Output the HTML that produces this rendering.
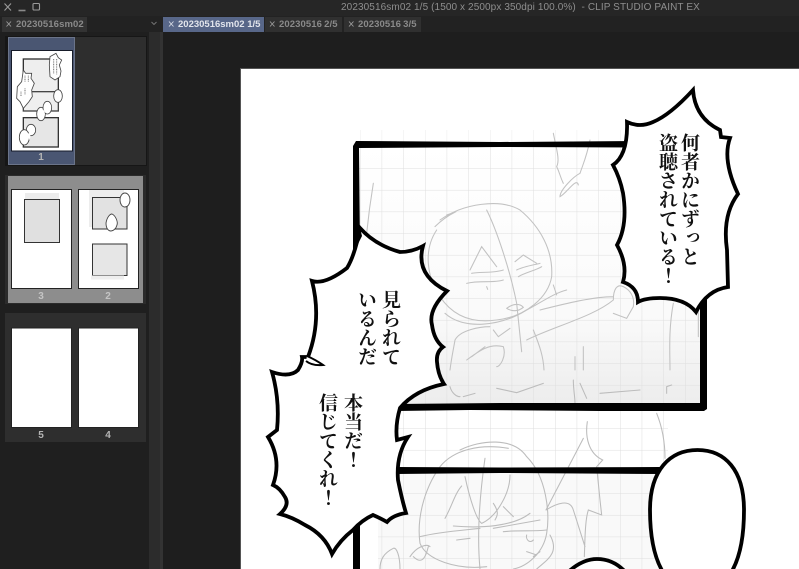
<!DOCTYPE html>
<html lang="ja"><head><meta charset="utf-8"><style>
html,body{margin:0;padding:0;width:799px;height:569px;overflow:hidden;background:#1e1e1e}
#a{position:relative;width:799px;height:569px;overflow:hidden;font-family:"Liberation Sans","Noto Sans CJK JP",sans-serif}
.b{position:absolute}
.t{position:absolute;white-space:nowrap;font-size:10px;line-height:16px;height:16px;filter:blur(.25px)}
.v{position:absolute;writing-mode:vertical-rl;white-space:nowrap;font-family:"Liberation Serif","Noto Serif CJK JP","Noto Serif CJK SC",serif;font-size:19px;line-height:19px;font-weight:700;color:#111}
.n{position:absolute;font-size:10px;font-weight:bold;color:#b5b5b5;width:20px;text-align:center;line-height:10px}
svg{position:absolute;left:0;top:0}
</style></head><body><div id="a">
<div class="b" style="left:0;top:0;width:799px;height:16px;background:#262626"></div>
<div class="b" style="left:0;top:16px;width:799px;height:16px;background:#222"></div>
<div class="b" style="left:149px;top:32px;width:14px;height:537px;background:#2c2c2c"></div>
<div class="b" style="left:160px;top:32px;width:3px;height:537px;background:#333"></div>
<div class="b" style="left:0;top:32px;width:149px;height:537px;background:#1f1f1f"></div>
<div class="b" style="left:2px;top:17px;width:85px;height:15px;background:#333"></div>
<div class="b" style="left:163px;top:17px;width:101px;height:15px;background:#586789"></div>
<div class="b" style="left:265px;top:17px;width:77px;height:15px;background:#303030"></div>
<div class="b" style="left:344px;top:17px;width:77px;height:15px;background:#303030"></div>
<div class="b" style="left:5px;top:36px;width:142px;height:130px;background:#161616"></div>
<div class="b" style="left:8px;top:37px;width:138px;height:128px;background:#2e2e2e"></div>
<div class="b" style="left:8px;top:37px;width:67px;height:128px;background:#4a5672;box-shadow:inset 0 0 0 1px #6b7489"></div>
<div class="b" style="left:5px;top:175px;width:141px;height:129px;background:#2b2b2b"></div>
<div class="b" style="left:8px;top:176px;width:135px;height:127px;background:#8d8d8d"></div>
<div class="b" style="left:5px;top:313px;width:141px;height:129px;background:#2e2e2e"></div>

<svg width="799" height="569" viewBox="0 0 799 569">
<defs>
<pattern id="g" x="425" y="428.3" width="21.67" height="21.67" patternUnits="userSpaceOnUse">
<path d="M0,0V21.67M0,0H21.67" stroke="#dedede" stroke-width="1" fill="none"/>
</pattern>
<linearGradient id="sh" x1="0" y1="0" x2="0" y2="1"><stop offset="0" stop-color="#fff"/><stop offset=".65" stop-color="#fafafa"/><stop offset="1" stop-color="#ececec"/></linearGradient>
<filter id="bl"><feGaussianBlur stdDeviation=".6"/></filter>
<filter id="bs"><feGaussianBlur stdDeviation=".3"/></filter>
</defs>
<!-- window icons -->
<g stroke="#9a9a9a" stroke-width="1.1" fill="none">
<path d="M4.5,3.5L11,10.5M11,3.5L4.5,10.5"/>
<path d="M18.5,10.5H25.5" stroke-width="1.6" stroke="#8a8a8a"/>
<rect x="33" y="3.5" width="6.5" height="6.5" rx="1"/>
</g>
<g stroke="#9c9c9c" stroke-width=".9" fill="none">
<path d="M6.5,21.5L11,26.5M11,21.5L6.5,26.5"/>
<path d="M151.5,22L154,24.5L156.5,22" stroke="#777"/>
<path d="M169,21.5L173.5,26.5M173.5,21.5L169,26.5" stroke="#d6dae4"/>
<path d="M270,21.5L274.500,26.500M274.500,21.500L270,26.500"/>
<path d="M349,21.5L353.500,26.500M353.500,21.500L349,26.500"/>
</g>

<!-- page -->
<rect x="240" y="68" width="559" height="501" fill="#555"/>
<rect x="241" y="69" width="558" height="500" fill="#fff"/>
<rect x="356" y="144" width="347" height="263" fill="url(#sh)"/>
<rect x="356" y="130" width="320" height="14" fill="url(#g)" opacity=".6"/>
<rect x="356" y="144" width="347" height="263" fill="url(#g)"/>
<rect x="396" y="407" width="272" height="63" fill="url(#g)"/>
<rect x="378" y="470" width="320" height="99" fill="#f9f9f9"/>
<rect x="378" y="470" width="320" height="99" fill="url(#g)"/>

<!-- pencil sketch top panel (coords of 3x crop) -->
<g transform="translate(340,70) scale(.33333)" fill="none" stroke="#c2c2c2" stroke-width="3.2" stroke-linecap="round" filter="url(#bl)">
<path d="M285,470C330,425 380,415 320,435M300,450C370,400 480,385 540,420C600,470 640,540 635,620C625,680 560,740 470,750C400,760 340,740 300,680C260,620 250,540 290,480"/>
<path d="M440,420C470,480 510,600 530,700L545,845"/>
<path d="M390,600L425,530L470,590M395,610C420,605 460,610 490,600M380,640C420,630 460,640 490,630"/>
<path d="M525,575L550,555L590,580M530,600C550,590 580,585 600,580M535,620C550,610 590,600 605,590"/>
<path d="M440,650l3,8M500,715C520,700 540,700 550,712C535,725 515,725 500,715"/>
<path d="M315,730C370,780 480,770 560,720C600,700 640,670 680,660M640,645L650,675"/>
<path d="M560,810C640,770 760,740 820,690M600,720C680,700 760,680 820,680M820,690C820,660 830,640 850,650C870,660 885,680 880,710L860,745L820,730"/>
<path d="M345,810C360,780 420,770 450,770M345,810C340,840 335,860 330,900M460,780L475,800L510,775M580,780C600,830 610,860 612,900"/>
<path d="M380,870C420,840 450,820 490,830C500,860 480,890 470,890M395,860L435,830M705,860V900M730,830V900"/>
<path d="M640,190C650,240 660,270 650,290C660,310 660,320 670,340M720,310C700,320 660,360 660,380C680,370 710,320 715,345M750,210C740,260 730,280 720,310"/>
<path d="M1000,700C985,780 990,850 990,900M100,340C90,400 85,440 80,490M1075,720V800"/>
</g>
<!-- pencil sketch lower (coords of 3x crop) -->
<g transform="translate(380,380) scale(.33333)" fill="none" stroke="#bcbcbc" stroke-width="3.2" stroke-linecap="round" filter="url(#bl)">
<path d="M385,205C300,190 220,210 180,260C130,330 110,420 120,490C140,540 230,570 320,560"/>
<path d="M240,210C300,180 400,170 440,230C500,290 510,400 500,460C490,520 440,560 400,567"/>
<path d="M255,290C270,360 290,420 305,430C350,410 390,340 390,285M315,235C300,340 290,460 300,567M195,415C215,380 225,340 245,318"/>
<path d="M340,370C360,400 350,410 345,420M370,380L400,410M220,438C300,445 400,440 450,400M340,445L480,420M120,470C180,455 260,450 300,445M370,455C420,450 460,455 500,450"/>
<path d="M230,480l40,-5M440,465a12,15 0 0 0 20,15M440,515l30,10M460,530l20,-15"/>
<path d="M622,125C615,170 625,220 668,240L650,260L660,360L665,405L625,390C615,420 615,480 613,530M498,390L610,175M498,390C530,370 570,355 580,390L615,500M830,100C850,150 855,200 855,235"/>
<path d="M40,505C10,520 0,540 0,567M60,567C60,530 50,500 40,505M90,530C110,500 140,490 150,500M100,530C130,560 140,520 145,500"/>
<path d="M580,0C580,30 585,50 585,70M600,10L620,55M350,25L410,38L490,10M210,20C215,40 230,50 240,50M250,50L285,40M860,20l15,-5M860,40L860,20M660,40L780,30"/>
<path d="M510,465C540,520 500,540 470,567"/>
</g>

<!-- frames -->
<g fill="#000">
<path d="M353,146L356,141L500,142L640,141V147.500L500,147L359,148L360,250H353Z"/>
<path d="M700,290H707L707,409L704,411L600,411L470,410L396,411V404L500,403L700,403Z"/>
<path d="M396,467L500,467.500L660,467V474L500,473L396,474Z"/>
<path d="M353,525H360V569H353Z"/>
</g>

<!-- balloons -->
<g fill="#fff" stroke="#000" stroke-width="3.8" stroke-linejoin="miter" stroke-miterlimit="8">
<path d="M693,90Q695,118 720,130L721,137L730,138Q722,160 738,194Q722,215 727,250L728,287Q707,290 696,312Q685,298 660,298Q645,298 638,302Q638,287 623,282Q628,265 617,245Q628,225 623,193Q620,178 613,165Q628,155 627,122Q640,128 653,122Q670,115 693,90Z"/>
<path d="M360,228Q375,245 400,252Q412,252 423,246Q415,275 447,291Q428,310 432,325Q434,340 443,347Q436,352 437,362Q438,375 444,384Q415,390 400,408Q395,425 397,440L408,437Q396,455 398,480Q402,500 406,513Q393,515 387,522Q380,518 373,515Q362,520 353,530Q340,540 332,554Q325,535 305,525Q292,517 280,514Q290,505 285,497Q280,488 273,485Q282,460 268,437L277,430Q280,400 272,372Q290,378 298,370Q303,362 302,357L308,357Q322,320 312,281Q325,285 347,268Q355,255 360,228Z"/>
<path d="M650,510C650,470 670,450 697.500,450C725,450 744,470 744,510C744,560 730,590 697,595C665,590 650,560 650,510Z"/>
<path d="M565,575C575,565 585,559 597,559C610,559 620,565 628,575V590H565Z"/>
</g>
<path d="M307,356Q316,360 323,365Q312,366 306,361" fill="#fff" stroke="#000" stroke-width="2"/>
<path d="M355,243L360,228L362,236L356,248Z" fill="#000"/>

<!-- thumb page 1 -->
<rect x="11.500" y="50.500" width="61" height="100.500" fill="#fff" stroke="#161b28" stroke-width="1"/>
<g transform="translate(5,45) scale(.33333)" filter="url(#bs)">
<rect x="55" y="42" width="105" height="98" fill="#eeeeee" stroke="#333" stroke-width="4"/>
<rect x="55" y="140" width="105" height="58" fill="#efefef" stroke="#444" stroke-width="4"/>
<rect x="55" y="218" width="105" height="88" fill="#e6e6e6" stroke="#333" stroke-width="4"/>
<path d="M153,25L160,38L170,45L163,60L168,78L165,95L150,105L135,95L133,60L135,35Z" fill="#fff" stroke="#444" stroke-width="2.500"/>
<path d="M55,75L62,85L80,85L78,100L88,115L80,135L82,155L72,170L55,190L45,170L35,160L37,125L50,110Z" fill="#fff" stroke="#444" stroke-width="2.500"/>
<ellipse cx="159" cy="153" rx="13" ry="19" fill="#fff" stroke="#444" stroke-width="2.500"/>
<ellipse cx="108" cy="207" rx="13" ry="20" fill="#fff" stroke="#444" stroke-width="2.500"/>
<ellipse cx="127" cy="188" rx="13" ry="19" fill="#fff" stroke="#444" stroke-width="2.500"/>
<ellipse cx="78" cy="255" rx="14" ry="17" fill="#fff" stroke="#444" stroke-width="2.500"/>
<ellipse cx="58" cy="277" rx="15" ry="23" fill="#fff" stroke="#444" stroke-width="2.500"/>
<path d="M108,195C118,190 122,205 118,215" fill="#fff"/>
<path d="M68,265C78,262 78,278 72,285" fill="#fff"/>
<path d="M146,42V85M155,42V88M60,92V110M70,92V112M60,130V150M48,140V155" stroke="#777" stroke-width="3" stroke-dasharray="3 2" fill="none"/>
</g>
<!-- thumb pages 2,3 -->
<rect x="11.500" y="189.500" width="60" height="99" fill="#fff" stroke="#222"/>
<rect x="78.500" y="189.500" width="60" height="99" fill="#fff" stroke="#222"/>
<rect x="25" y="193" width="34" height="50" fill="#ececec"/>
<rect x="24.500" y="199.500" width="35" height="43" fill="#e0e0e0" stroke="#333" stroke-width="1"/>
<rect x="89" y="190" width="35" height="37" fill="#ededed"/>
<rect x="92.500" y="197.500" width="34.500" height="31.500" fill="#e2e2e2" stroke="#333" stroke-width="1"/>
<rect x="92.500" y="244" width="34.500" height="31.500" fill="#e6e6e6" stroke="#333" stroke-width="1"/>
<rect x="91" y="275.500" width="33" height="4" fill="#eee"/>
<ellipse cx="125" cy="200" rx="5" ry="7" fill="#fff" stroke="#444" stroke-width=".9"/>
<path d="M106,223C107,217 110,214 112,214C116,216 118,222 117,225C116,229 113,231 111,231C108,231 106,228 106,223Z" fill="#fff" stroke="#444" stroke-width=".9"/>
<!-- thumb pages 4,5 -->
<rect x="11.500" y="328" width="60" height="99.500" fill="#fff" stroke="#222"/>
<rect x="78.500" y="328" width="60" height="99.500" fill="#fff" stroke="#222"/>
</svg>

<div class="t" style="left:341px;top:0;color:#8e8e8e;font-size:10px;letter-spacing:.1px">20230516sm02 1/5 (1500 x 2500px 350dpi 100.0%)&nbsp; - CLIP STUDIO PAINT EX</div>
<div class="t" style="left:16px;top:17px;color:#8a8a8a;font-weight:bold;font-size:9.500px;letter-spacing:.1px">20230516sm02</div>
<div class="t" style="left:178px;top:17px;color:#e2e5ec;font-weight:bold;font-size:9.500px">20230516sm02 1/5</div>
<div class="t" style="left:279px;top:17px;color:#8a8a8a;font-weight:bold;font-size:9.500px;letter-spacing:.1px">20230516&#8201;2/5</div>
<div class="t" style="left:358px;top:17px;color:#8a8a8a;font-weight:bold;font-size:9.500px;letter-spacing:.1px">20230516&#8201;3/5</div>

<div class="n" style="left:31px;top:153px">1</div>
<div class="n" style="left:31px;top:292px;color:#c4c4c4">3</div>
<div class="n" style="left:98px;top:292px;color:#c4c4c4">2</div>
<div class="n" style="left:31px;top:431px">5</div>
<div class="n" style="left:98px;top:431px">4</div>

<div class="v" style="left:679px;top:133px">何者かにずっと</div>
<div class="v" style="left:657px;top:133px">盗聴されている！</div>
<div class="v" style="left:380px;top:290px">見られて</div>
<div class="v" style="left:356px;top:290px">いるんだ</div>
<div class="v" style="left:342px;top:393px">本当だ！</div>
<div class="v" style="left:317px;top:393px">信じてくれ！</div>
</div></body></html>
